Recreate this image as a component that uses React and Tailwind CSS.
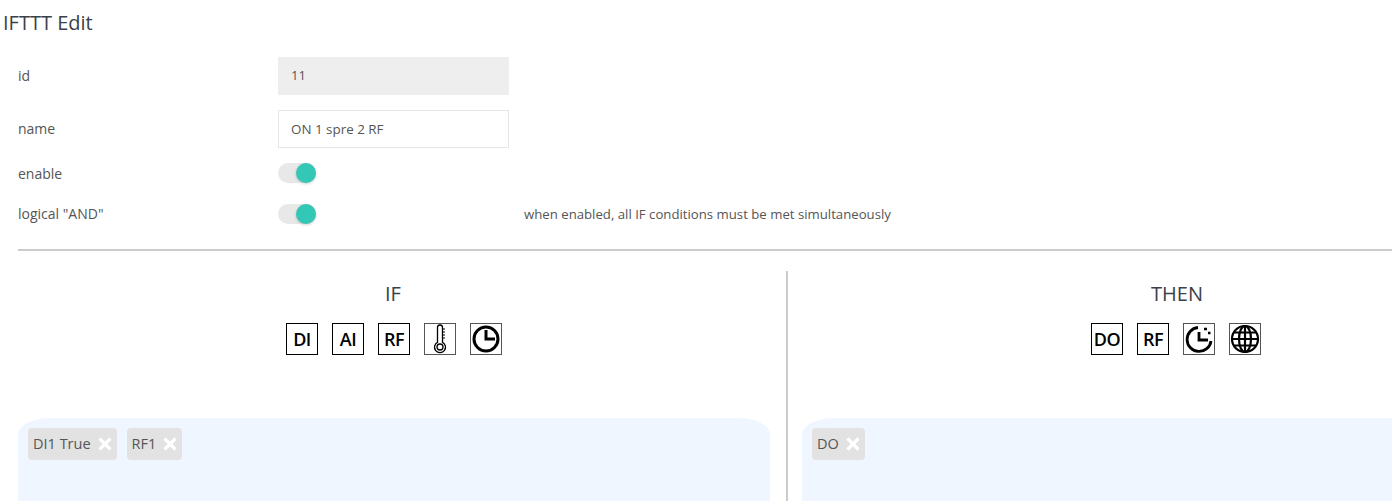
import React from 'react';

const font = { fontFamily: '"Open Sans", "Noto Sans", sans-serif' };

const TextIcon = ({ label }) => (
  <span className="flex h-[32px] w-[32px] items-center justify-center border border-black text-[18px] font-[550] leading-none tracking-[-0.5px] text-black">
    {label}
  </span>
);

const DrawIcon = ({ children }) => (
  <span className="flex h-[32px] w-[32px] items-center justify-center border border-[#555]">
    <svg width="30" height="30" viewBox="0 0 30 30" fill="none" stroke="black">
      {children}
    </svg>
  </span>
);

const Toggle = () => (
  <div className="relative h-[20px] w-[38px] rounded-full bg-[#e8e8e8]">
    <div className="absolute left-[18px] top-0 h-[20px] w-[20px] rounded-full bg-[#33c7b5] shadow-[0_1px_3px_rgba(0,0,0,0.2)]" />
  </div>
);

const Tag = ({ label }) => (
  <span className="flex h-[32px] items-center gap-[7px] rounded-[4px] bg-[#e2e2e2] pl-[5px] pr-[5px] text-[14.5px] text-[#555]">
    {label}
    <svg width="14" height="14" viewBox="0 0 14 14" stroke="white" strokeWidth="3.2">
      <path d="M1.5 1.5 L12.5 12.5 M12.5 1.5 L1.5 12.5" />
    </svg>
  </span>
);

const Row = ({ label, labelClass = '', className = '', children }) => (
  <div className={`flex items-center ${className}`}>
    <span className={`w-[260px] shrink-0 text-[14px] leading-[16px] text-[#555] ${labelClass}`}>{label}</span>
    {children}
  </div>
);

const Column = ({ title, icons, tags, iconsClass = '' }) => (
  <div className="flex w-[752px] shrink-0 flex-col">
    <h3 className="mt-[9px] h-[28px] pr-[2px] text-center text-[20px] leading-[28px] text-[#3a4248]">{title}</h3>
    <div className={`mt-[14px] flex h-[34px] items-center justify-center gap-[14px] ${iconsClass}`}>{icons}</div>
    <div className="mt-[62px] flex h-[83px] gap-[10px] rounded-tl-[32px_16px] rounded-tr-[32px_16px] bg-[#eff6ff] pl-[10px] pt-[10px]">
      {tags}
    </div>
  </div>
);

export default function App() {
  return (
    <div className="h-[501px] w-[1392px] overflow-hidden bg-white" style={font}>
      <h2 className="pl-[3px] pt-[10px] text-[20px] leading-[26px] text-[#3a4248]">IFTTT Edit</h2>

      <div className="pl-[18px] pt-[21px]">
        <Row label="id">
          <div className="flex h-[38px] w-[231px] items-center bg-[#eeeeee] px-[13px] text-[13px] text-[#555]">11</div>
        </Row>
        <Row label="name" className="mt-[15px]">
          <div className="flex h-[38px] w-[231px] items-center border border-[#e6e6e6] px-[12px] text-[13.4px] text-[#555]">
            ON 1 spre 2 RF
          </div>
        </Row>
        <Row label="enable" labelClass="pt-[2px]" className="mt-[15px]">
          <Toggle />
        </Row>
        <Row label={'logical "AND"'} className="mt-[21px]">
          <Toggle />
          <span className="ml-[208px] text-[13.2px] leading-[16px] text-[#555]">when enabled, all IF conditions must be met simultaneously</span>
        </Row>

        <div className="mt-[25px] h-[2px] bg-[#cccccc]" />

        <div className="mt-[20px] flex">
          <Column
            title="IF"
            icons={
              <>
                <TextIcon label="DI" />
                <TextIcon label="AI" />
                <TextIcon label="RF" />
                <DrawIcon>
                  <path d="M12.5 3.5 a2.5 2.5 0 0 1 5 0 V18.3 a5.5 5.5 0 1 1 -5 0 Z" strokeWidth="1.3" />
                  <circle cx="15" cy="23" r="3" strokeWidth="1.3" />
                  <path d="M18 5 h2 M18 8 h2 M18 11 h2 M18 14 h2" strokeWidth="1" />
                </DrawIcon>
                <DrawIcon>
                  <circle cx="15" cy="15" r="12" strokeWidth="3" />
                  <path d="M15 6 V15 H24" strokeWidth="3" />
                </DrawIcon>
              </>
            }
            tags={
              <>
                <Tag label="DI1 True" />
                <Tag label="RF1" />
              </>
            }
          />
          <div className="ml-[16px] w-[2px] shrink-0 bg-[#cccccc]" />
          <div className="ml-[14px] flex shrink-0">
            <Column
              title="THEN"
              iconsClass="pr-[4px]"
              icons={
                <>
                  <TextIcon label="DO" />
                  <TextIcon label="RF" />
                  <DrawIcon>
                    <path d="M14 3.5 A12 12 0 1 0 27 17" strokeWidth="2.8" />
                    <path d="M15 8 V16 H24" strokeWidth="2.8" />
                    <path d="M20 5 h3 M24 9 h2.5" strokeWidth="2.6" />
                  </DrawIcon>
                  <DrawIcon>
                    <circle cx="15" cy="15" r="13" strokeWidth="2.2" />
                    <ellipse cx="15" cy="15" rx="6" ry="13" strokeWidth="2.2" />
                    <path d="M15 2 V28 M2 15 H28 M4 8.5 H26 M4 21.5 H26" strokeWidth="2.2" />
                  </DrawIcon>
                </>
              }
              tags={<Tag label="DO" />}
            />
          </div>
        </div>
      </div>
    </div>
  );
}
